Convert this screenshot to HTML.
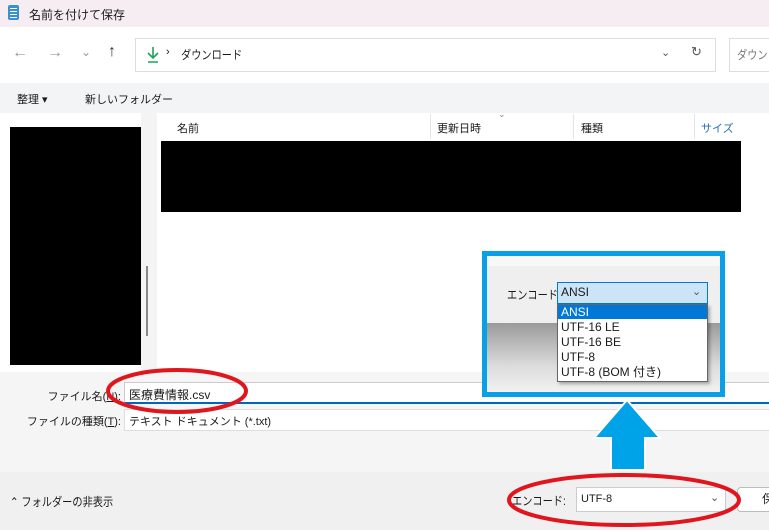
<!DOCTYPE html>
<html><head><meta charset="utf-8"><style>
*{margin:0;padding:0;box-sizing:border-box}
body{width:769px;height:530px;overflow:hidden;position:relative;background:#fff;font-family:"Liberation Sans","Noto Sans CJK JP",sans-serif;font-size:12px;color:#1a1a1a}
.a{position:absolute}
.n{transform:scaleX(.85);transform-origin:left top;white-space:nowrap}
</style></head><body>
<div class="a" style="left:0;top:0;width:769px;height:27px;background:#f6edf3"></div>
<div class="a" style="left:8px;top:5px;width:11px;height:15px;background:#3a8fd0;border-radius:2px"></div>
<div class="a" style="left:10px;top:8px;width:7px;height:1px;background:#fff;box-shadow:0 3px #fff,0 6px #fff,0 9px #fff"></div>
<div class="a" style="left:29px;top:6px;font-size:12px">名前を付けて保存</div>
<div class="a" style="left:12px;top:44px;color:#999;font-size:16px">←</div>
<div class="a" style="left:47px;top:44px;color:#999;font-size:16px">→</div>
<div class="a" style="left:81px;top:45px;color:#999;font-size:12px">⌄</div>
<div class="a" style="left:108px;top:43px;color:#333;font-size:16px">↑</div>
<div class="a" style="left:135px;top:38px;width:581px;height:34px;border:1px solid #ddd;background:#fff"></div>
<svg class="a" style="left:146px;top:46px" width="14" height="18"><path d="M7 1v11M2 7l5 5 5-5M2 16h10" stroke="#1fa35a" stroke-width="1.6" fill="none"/></svg>
<div class="a" style="left:166px;top:46px;font-size:11px">›</div>
<div class="a" style="left:181px;top:46px;font-size:12px" ><div class="n">ダウンロード</div></div>
<div class="a" style="left:661px;top:46px;font-size:11px;color:#555">⌄</div>
<div class="a" style="left:691px;top:44px;font-size:13px;color:#555">↻</div>
<div class="a" style="left:729px;top:38px;width:60px;height:34px;border:1px solid #ddd"></div>
<div class="a" style="left:737px;top:46px;font-size:12px;color:#777"><div class="n">ダウンロ</div></div>
<div class="a" style="left:0;top:83px;width:769px;height:30px;background:#f3f4f6"></div>
<div class="a" style="left:17px;top:91px;font-size:11px">整理 ▾</div>
<div class="a" style="left:85px;top:91px;font-size:11px">新しいフォルダー</div>
<div class="a" style="left:141px;top:113px;width:16px;height:259px;background:#f4f4f4"></div>
<div class="a" style="left:146px;top:266px;width:2px;height:70px;background:#888"></div>
<div class="a" style="left:10px;top:127px;width:131px;height:238px;background:#000"></div>
<div class="a" style="left:177px;top:120px;font-size:11px">名前</div>
<div class="a" style="left:430px;top:114px;width:1px;height:25px;background:#e5e5e5"></div>
<div class="a" style="left:437px;top:120px;font-size:11px">更新日時</div>
<div class="a" style="left:498px;top:109px;font-size:9px;color:#888">⌄</div>
<div class="a" style="left:573px;top:114px;width:1px;height:25px;background:#e5e5e5"></div>
<div class="a" style="left:581px;top:120px;font-size:11px">種類</div>
<div class="a" style="left:694px;top:114px;width:1px;height:25px;background:#e5e5e5"></div>
<div class="a" style="left:701px;top:120px;font-size:11px;color:#2a6fb8">サイズ</div>
<div class="a" style="left:161px;top:141px;width:580px;height:71px;background:#000"></div>
<div class="a" style="left:0;top:372px;width:769px;height:100px;background:#f5f5f5"></div>
<div class="a" style="right:648px;top:388px;font-size:11px">ファイル名(<u>N</u>):</div>
<div class="a" style="left:124px;top:382px;width:650px;height:22px;background:#fff;border:1px solid #ccc;border-bottom:2px solid #0067c0"></div>
<div class="a" style="left:129px;top:386px;font-size:12px">医療費情報.csv</div>
<div class="a" style="right:648px;top:413px;font-size:11px">ファイルの種類(<u>T</u>):</div>
<div class="a" style="left:124px;top:409px;width:650px;height:22px;background:#fff;border:1px solid #ddd"></div>
<div class="a" style="left:129px;top:413px;font-size:11px">テキスト ドキュメント (*.txt)</div>
<div class="a" style="left:0;top:472px;width:769px;height:58px;background:#f0f0f0"></div>
<div class="a" style="left:10px;top:493px;font-size:12px"><div class="n">⌃ フォルダーの非表示</div></div>
<div class="a" style="left:512px;top:492px;font-size:12px"><div class="n">エンコード:</div></div>
<div class="a" style="left:576px;top:487px;width:150px;height:25px;background:#fff;border:1px solid #ccc"></div>
<div class="a" style="left:581px;top:493px;font-size:11px">UTF-8</div>
<div class="a" style="left:710px;top:491px;font-size:11px;color:#555">⌄</div>
<div class="a" style="left:737px;top:487px;width:40px;height:25px;background:#fff;border:1px solid #bbb;border-radius:4px"></div>
<div class="a" style="left:762px;top:490px;font-size:12px">保</div>
<div class="a" style="left:482px;top:251px;width:243px;height:146px;border:5px solid #0aa0e6;background:linear-gradient(#f8f8f8 0,#f8f8f8 10px,#efefef 10px,#efefef 67px,#9a9a9a 67px,#dcdcdc 110px,#f2f2f2 137px)"></div>
<div class="a" style="left:507px;top:286px;font-size:12px"><div class="n">エンコード:</div></div>
<div class="a" style="left:557px;top:282px;width:151px;height:22px;background:#cce4f7;border:1px solid #0078d7"></div>
<div class="a" style="left:561px;top:285px;font-size:12px">ANSI</div>
<div class="a" style="left:692px;top:285px;font-size:11px;color:#555">⌄</div>
<div class="a" style="left:557px;top:304px;width:151px;height:78px;background:#fff;border:1px solid #666;box-shadow:2px 2px 3px rgba(0,0,0,.3)"></div>
<div class="a" style="left:558px;top:305px;width:149px;height:14px;background:#0078d7"></div>
<div class="a" style="left:561px;top:305px;font-size:12px;line-height:15px;color:#fff">ANSI</div>
<div class="a" style="left:561px;top:320px;font-size:12px;line-height:15px">UTF-16 LE<br>UTF-16 BE<br>UTF-8<br>UTF-8 (BOM 付き)</div>
<svg class="a" style="left:590px;top:398px" width="75" height="74"><path d="M37 2L70 40H55V72H21V40H4Z" fill="#00a2e8" stroke="#fff" stroke-width="2"/></svg>
<svg class="a" style="left:0;top:0" width="769" height="530"><ellipse cx="177" cy="391" rx="69" ry="21" fill="none" stroke="#e0161e" stroke-width="4"/><ellipse cx="624" cy="500" rx="115" ry="25" fill="none" stroke="#e0161e" stroke-width="4"/></svg>
</body></html>
